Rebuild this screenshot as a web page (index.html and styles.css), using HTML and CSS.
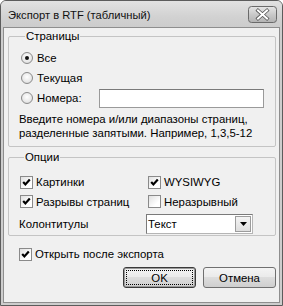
FILE: index.html
```html
<!DOCTYPE html>
<html>
<head>
<meta charset="utf-8">
<link rel="stylesheet" href="styles.css">
</head>
<body>
<div class="window">
  <div class="titlebar">
    <span class="title">Экспорт в RTF (табличный)</span>
    <span class="close">
      <svg width="29" height="17" viewBox="0 0 29 17">
        <defs>
          <linearGradient id="cg" x1="0" y1="0" x2="0" y2="1">
            <stop offset="0" stop-color="#e6e6e6"/>
            <stop offset="0.5" stop-color="#c9c9c9"/>
            <stop offset="1" stop-color="#b2b2b2"/>
          </linearGradient>
        </defs>
        <rect x="0.5" y="0.5" width="28" height="16" rx="3" fill="url(#cg)" stroke="#6a6a6a"/>
        <path d="M10 4.5 L19 12.5 M19 4.5 L10 12.5" stroke="#555" stroke-width="3.6" stroke-linecap="square"/>
        <path d="M10 4.5 L19 12.5 M19 4.5 L10 12.5" stroke="#fff" stroke-width="2" stroke-linecap="square"/>
      </svg>
    </span>
  </div>
  <div class="client">
    <fieldset class="group pages">
      <legend>Страницы</legend>
      <div class="row"><span class="radio checked"></span><span>Все</span></div>
      <div class="row"><span class="radio"></span><span>Текущая</span></div>
      <div class="row"><span class="radio"></span><span class="numlbl">Номера:</span><span class="input"></span></div>
      <p class="hint">Введите номера и/или диапазоны страниц,<br>разделенные запятыми. Например, 1,3,5-12</p>
    </fieldset>
    <fieldset class="group options">
      <legend>Опции</legend>
      <div class="optgrid">
        <div class="check"><span class="box"><svg width="11" height="11" viewBox="0 0 11 11"><path d="M2.2 5 L4.4 7.4 L8.8 2.6" fill="none" stroke="#000" stroke-width="2.2"/></svg></span><span>Картинки</span></div>
        <div class="check"><span class="box"><svg width="11" height="11" viewBox="0 0 11 11"><path d="M2.2 5 L4.4 7.4 L8.8 2.6" fill="none" stroke="#000" stroke-width="2.2"/></svg></span><span>WYSIWYG</span></div>
        <div class="check"><span class="box"><svg width="11" height="11" viewBox="0 0 11 11"><path d="M2.2 5 L4.4 7.4 L8.8 2.6" fill="none" stroke="#000" stroke-width="2.2"/></svg></span><span>Разрывы страниц</span></div>
        <div class="check"><span class="box"></span><span>Неразрывный</span></div>
        <div class="footlbl">Колонтитулы</div>
        <div class="combo"><span class="combotext">Текст</span><span class="dropbtn"><svg width="7" height="4" viewBox="0 0 7 4"><path d="M0 0 H7 L3.5 4 Z" fill="#000"/></svg></span></div>
      </div>
    </fieldset>
    <div class="check openafter"><span class="box"><svg width="11" height="11" viewBox="0 0 11 11"><path d="M2.2 5 L4.4 7.4 L8.8 2.6" fill="none" stroke="#000" stroke-width="2.2"/></svg></span><span>Открыть после экспорта</span></div>
    <div class="buttons">
      <div class="btn default"><span class="focus">OK</span></div>
      <div class="btn">Отмена</div>
    </div>
  </div>
</div>
</body>
</html>
```

FILE: styles.css
```css
html, body {
  margin: 0;
  padding: 0;
  background: #ffffff;
}
body {
  font-family: "Liberation Sans", Arial, sans-serif;
  font-size: 11.4px;
  color: #000;
}
.window {
  width: 283px;
  height: 306px;
  box-sizing: border-box;
  border: 1px solid #5c5c5c;
  border-radius: 6px 6px 0 0;
  background: #cdcdcd;
  display: flex;
  flex-direction: column;
  overflow: hidden;
}
.titlebar {
  height: 26px;
  flex: none;
  display: flex;
  align-items: center;
  justify-content: space-between;
  padding: 0 5px 0 7px;
  background: linear-gradient(#e2e2e2, #d2d2d2 60%, #cccccc);
}
.title {
  font-size: 11.2px;
  color: #111;
  padding-top: 1px;
}
.close {
  display: flex;
  margin-top: 1px;
}
.client {
  flex: 1;
  margin: 0 2px 2px 2px;
  border: 1px solid #8e8e8e;
  background: #f0f0f0;
  padding: 2px 3px 0 4px;
  display: flex;
  flex-direction: column;
}
.group {
  margin: 0;
  padding: 0;
  border: 1px solid #c4c4c4;
  border-radius: 2px;
  min-width: 0;
}
.group legend {
  margin-left: 4px;
  padding: 0 1px;
  line-height: 13px;
  height: 13px;
}
.pages {
  padding: 5px 11px 6px 12px;
}
.row {
  height: 20px;
  display: flex;
  align-items: center;
}
.radio {
  width: 10px;
  height: 10px;
  border: 1px solid #8a8a8a;
  border-radius: 50%;
  background: radial-gradient(circle at 50% 40%, #ffffff 0%, #e8e8e8 60%, #cfcfcf 100%);
  margin-right: 4px;
  display: flex;
  align-items: center;
  justify-content: center;
  flex: none;
}
.radio.checked::after {
  content: "";
  width: 4px;
  height: 4px;
  border-radius: 50%;
  background: #111;
}
.numlbl {
  width: 62px;
  flex: none;
}
.input {
  flex: 1;
  height: 17px;
  border: 1px solid #9a9a9a;
  border-top-color: #7a7a7a;
  background: #fff;
}
.hint {
  margin: 4px 0 0 -2px;
  line-height: 14px;
}
.options {
  margin-top: 4px;
  padding: 8px 11px 4px 11px;
}
.optgrid {
  display: grid;
  grid-template-columns: 128px 1fr;
  grid-template-rows: 20px 19px 20px;
  row-gap: 0;
  align-items: center;
}
.check {
  display: flex;
  align-items: center;
}
.box {
  width: 11px;
  height: 11px;
  border: 1px solid #8a8a8a;
  background: linear-gradient(135deg, #e0e0e0, #ffffff 70%);
  margin-right: 3px;
  flex: none;
  display: flex;
}
.footlbl {
  margin-left: -1px;
  margin-top: 5px;
}
.combo {
  margin-top: 5px;
  margin-left: -2px;
  width: 107px;
  height: 20px;
  box-sizing: border-box;
  border: 1px solid #7a7a7a;
  border-right-color: #b5b5b5;
  border-bottom-color: #b5b5b5;
  background: #fff;
  display: flex;
  align-items: center;
  justify-content: space-between;
  padding: 0 1px 0 1px;
}
.dropbtn {
  width: 16px;
  height: 16px;
  box-sizing: border-box;
  border: 1px solid #9c9c9c;
  background: linear-gradient(#f4f4f4, #dedede);
  display: flex;
  align-items: center;
  justify-content: center;
}
.openafter {
  margin: 8px 0 0 11px;
  height: 20px;
}
.buttons {
  margin-top: 3px;
  display: flex;
  justify-content: flex-end;
  gap: 7px;
}
.btn {
  width: 73px;
  height: 21px;
  box-sizing: border-box;
  border: 1px solid #707070;
  border-radius: 3px;
  background: linear-gradient(#f4f4f4, #ebebeb 45%, #dddddd 50%, #cfcfcf);
  display: flex;
  align-items: center;
  justify-content: center;
  font-size: 11.4px;
}
.btn.default {
  border-color: #3a3a3a;
  box-shadow: inset 0 0 0 1px #9a9a9a;
  padding: 2px;
}
.focus {
  flex: 1;
  align-self: stretch;
  border: 1px dotted #000;
  display: flex;
  align-items: center;
  justify-content: center;
}
```
